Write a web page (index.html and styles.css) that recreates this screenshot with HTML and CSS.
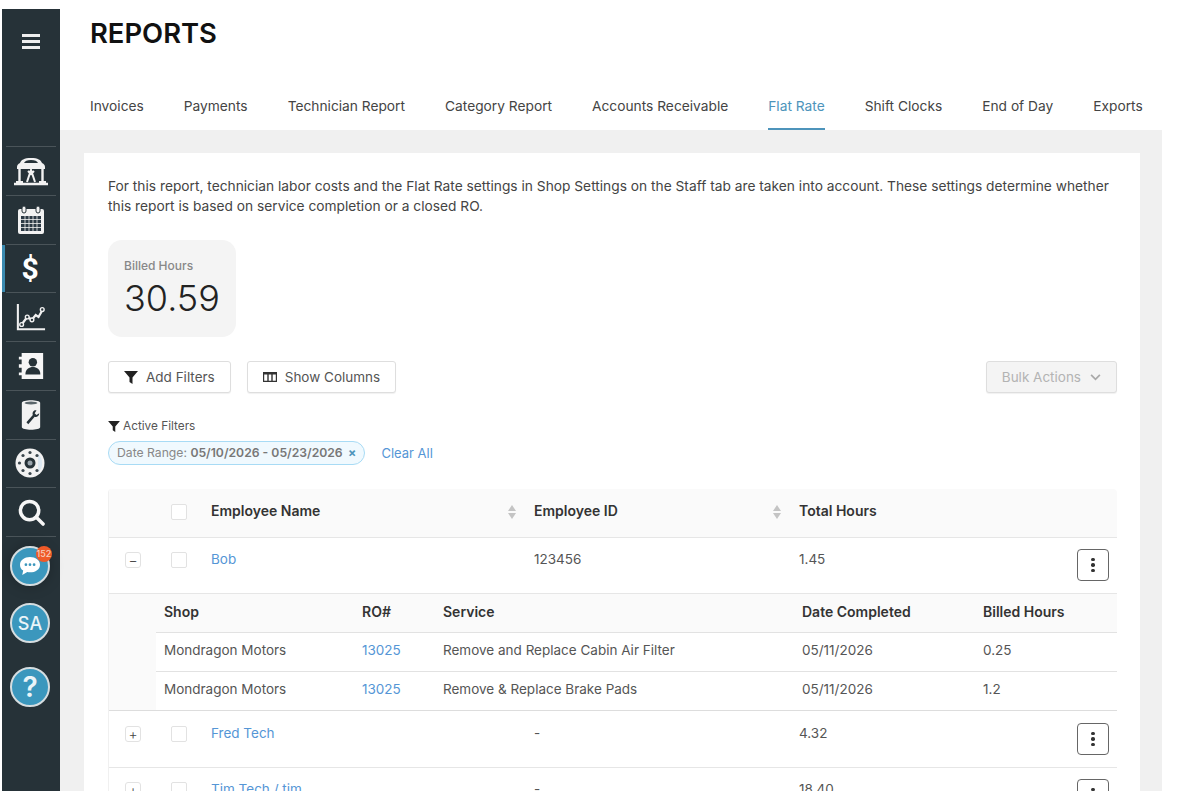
FILE: index.html
```html
<!DOCTYPE html>
<html lang="en">
  <head>
    <meta charset="UTF-8" />
    <meta name="viewport" content="width=device-width, initial-scale=1.0" />
    <title>Reports</title>
    <link rel="stylesheet" href="styles.css">
  </head>
  <body>
    <div class="frame">
      <nav class="sidebar">
        <div class="burger"><span></span><span></span><span></span></div>

        <a class="nav-item">
          <svg viewBox="0 0 36 30" width="36" height="30" fill="none" stroke="#f2f2f2" stroke-width="2">
            <path d="M1 28h34" stroke-width="2.500"/>
            <path d="M3 26h7M26 26h7" stroke-width="2"/>
            <path d="M6.500 11v15M29.500 11v15" stroke-width="2.400"/>
            <path d="M4 11c0-2 1-3 3-4 1-3 4-5 11-5s10 2 11 5c2 1 3 2 3 4v2H4z" fill="#f2f2f2" stroke="none"/>
            <path d="M11 7c1-2 3-3 7-3s6 1 7 3z" fill="#263238" stroke="none"/>
            <path d="M14 26l4-12 4 12M15 15l3 3 3-3" stroke-width="2"/>
          </svg>
        </a>
        <a class="nav-item">
          <svg viewBox="0 0 28 30" width="28" height="30" fill="none">
            <rect x="1" y="4" width="26" height="25" rx="2" fill="#f2f2f2"/>
            <rect x="5" y="1" width="4" height="7" rx="2" fill="#f2f2f2" stroke="#263238"/>
            <rect x="19" y="1" width="4" height="7" rx="2" fill="#f2f2f2" stroke="#263238"/>
            <path d="M4 11h20v15H4z" fill="#2c3a45"/>
            <path d="M4 14.500h20M4 18.500h20M4 22.500h20M8 11v15M12 11v15M16 11v15M20 11v15" stroke="#f2f2f2" stroke-width=".8"/>
          </svg>
        </a>
        <a class="nav-item active"><span class="dollar">$</span></a>
        <a class="nav-item">
          <svg viewBox="0 0 32 30" width="30" height="30" fill="none" stroke="#f0f0f0">
            <path d="M2 1v27h29" stroke-width="2.200"/>
            <path d="M6 23l6-8 5 3 4-5 3 2 4-7" stroke-width="2.400"/>
            <circle cx="6" cy="23" r="2" fill="#263238" stroke-width="1.500"/>
            <circle cx="12" cy="15" r="2" fill="#263238" stroke-width="1.500"/>
            <circle cx="17" cy="18" r="2" fill="#263238" stroke-width="1.500"/>
            <circle cx="28" cy="7" r="2" fill="#263238" stroke-width="1.500"/>
          </svg>
        </a>
        <a class="nav-item">
          <svg viewBox="0 0 28 30" width="28" height="28">
            <path d="M4 1h23v28H4v-4H1v-3h3v-5H1v-4h3V8H1V5h3z" fill="#f6f6f6"/>
            <circle cx="16" cy="11" r="4.500" fill="#263238"/>
            <path d="M8 24c0-6 4-8 8-8s8 2 8 8z" fill="#263238"/>
          </svg>
        </a>
        <a class="nav-item">
          <svg viewBox="0 0 24 34" width="22" height="32">
            <path d="M2 4c0-4 20-4 20 0v26c0 4-20 4-20 0z" fill="#f2f2f2"/>
            <ellipse cx="12" cy="4" rx="7" ry="1.600" fill="#5b666b"/>
            <path d="M7 25l7-8c-1-3 1-6 4-5l-2 3 2 2 3-2c0 3-3 5-5 4l-7 8z" fill="#263238"/>
          </svg>
        </a>
        <a class="nav-item">
          <svg viewBox="0 0 32 30" width="32" height="30">
            <circle cx="15" cy="15" r="14.500" fill="#f2f2f2"/>
            <path d="M23 6c5 3 6 15 0 18z" fill="#dce8f2"/>
            <circle cx="15" cy="15" r="5.500" fill="#263238"/>
            <circle cx="15" cy="15" r="2.500" fill="#9aa5ad"/>
            <g fill="#3a464d">
              <circle cx="15" cy="4.500" r="1.600"/><circle cx="15" cy="25.500" r="1.600"/>
              <circle cx="4.500" cy="15" r="1.600"/><circle cx="8" cy="7.500" r="1.600"/>
              <circle cx="22" cy="7.500" r="1.600"/><circle cx="8" cy="22.500" r="1.600"/>
              <circle cx="22" cy="22.500" r="1.600"/>
            </g>
          </svg>
        </a>
        <a class="nav-item">
          <svg viewBox="0 0 28 28" width="27" height="27" fill="none" stroke="#f6f6f6">
            <circle cx="12" cy="12" r="9.500" stroke-width="3.600"/>
            <path d="M19 19l7 7" stroke-width="3.600" stroke-linecap="round"/>
          </svg>
        </a>

        <div class="round-btn first">
          <svg viewBox="0 0 24 22" width="22" height="20">
            <path d="M12 1c6 0 11 3.500 11 8.500S18 18 12 18c-1 0-2 0-3-.3L3.500 21l1-5C2 14.500 1 12 1 9.500 1 4.500 6 1 12 1z" fill="#fff"/>
            <circle cx="7.500" cy="9.500" r="1.500" fill="#3b97bd"/>
            <circle cx="12" cy="9.500" r="1.500" fill="#3b97bd"/>
            <circle cx="16.500" cy="9.500" r="1.500" fill="#3b97bd"/>
          </svg>
          <span class="badge">152</span>
        </div>
        <div class="round-btn">SA</div>
        <div class="round-btn help">?</div>
      </nav>

      <main class="main">
        <header class="top">
          <h1>REPORTS</h1>
          <div class="tabs">
            <a>Invoices</a>
            <a>Payments</a>
            <a>Technician Report</a>
            <a>Category Report</a>
            <a>Accounts Receivable</a>
            <a class="current">Flat Rate</a>
            <a>Shift Clocks</a>
            <a>End of Day</a>
            <a>Exports</a>
          </div>
        </header>

        <div class="content">
          <section class="card">
            <p class="intro">For this report, technician labor costs and the Flat Rate settings in Shop Settings on the Staff tab are taken into account. These settings determine whether this report is based on service completion or a closed RO.</p>

            <div class="stat">
              <div class="stat-label">Billed Hours</div>
              <div class="stat-value">30.59</div>
            </div>

            <div class="toolbar">
              <button class="btn">
                <svg class="funnel" viewBox="0 0 14 13" width="14" height="13"><path d="M0 0h14L8.500 6.500V13l-3-2V6.500z"/></svg>
                Add Filters
              </button>
              <button class="btn">
                <svg viewBox="0 0 14 10" width="14" height="10" fill="none" stroke="#333"><path d="M.5.500h13v9H.5zM5 .500v9M9 .500v9" stroke-width="1.400"/><path d="M.5 1.500h13" stroke-width="2"/></svg>
                Show Columns
              </button>
              <button class="btn bulk">
                Bulk Actions
                <svg viewBox="0 0 12 8" width="11" height="7" fill="none" stroke="#a9a9a9" stroke-width="2"><path d="M1 1l5 5 5-5"/></svg>
              </button>
            </div>

            <div class="filters-title">
              <svg class="funnel" viewBox="0 0 14 13" width="12" height="11"><path d="M0 0h14L8.500 6.500V13l-3-2V6.500z"/></svg>
              Active Filters
            </div>
            <div class="filters">
              <span class="chip">Date Range: <b>05/10/2026 - 05/23/2026</b> <i>×</i></span>
              <a class="clear">Clear All</a>
            </div>

            <div class="table">
              <div class="row head">
                <span></span>
                <span class="check"></span>
                <span class="sortable">Employee Name
                  <svg class="sort" viewBox="0 0 10 16" width="10" height="16"><path d="M5 1l4 6H1zM5 15l4-6H1z"/></svg>
                </span>
                <span class="sortable">Employee ID
                  <svg class="sort" viewBox="0 0 10 16" width="10" height="16"><path d="M5 1l4 6H1zM5 15l4-6H1z"/></svg>
                </span>
                <span>Total Hours</span>
                <span></span>
              </div>

              <div class="row open">
                <span class="toggle">−</span>
                <span class="check"></span>
                <a>Bob</a>
                <span>123456</span>
                <span>1.45</span>
                <span class="more"><i></i><i></i><i></i></span>
              </div>

              <div class="sub">
                <div class="sub-row sub-head">
                  <span>Shop</span><span>RO#</span><span>Service</span><span>Date Completed</span><span>Billed Hours</span>
                </div>
                <div class="sub-row">
                  <span>Mondragon Motors</span><a>13025</a><span>Remove and Replace Cabin Air Filter</span><span>05/11/2026</span><span>0.25</span>
                </div>
                <div class="sub-row">
                  <span>Mondragon Motors</span><a>13025</a><span>Remove &amp; Replace Brake Pads</span><span>05/11/2026</span><span>1.2</span>
                </div>
              </div>

              <div class="row after-sub">
                <span class="toggle">+</span>
                <span class="check"></span>
                <a>Fred Tech</a>
                <span>-</span>
                <span>4.32</span>
                <span class="more"><i></i><i></i><i></i></span>
              </div>

              <div class="row">
                <span class="toggle">+</span>
                <span class="check"></span>
                <a>Tim Tech / tim</a>
                <span>-</span>
                <span>18.40</span>
                <span class="more"><i></i><i></i><i></i></span>
              </div>
            </div>
          </section>
        </div>
      </main>
    </div>
  </body>
</html>
```

FILE: styles.css
```css
html,
body {
  margin: 0;
  padding: 0;
  height: 800px;
  overflow: hidden;
  background: #fff;
}
body {
  font-family: Inter, "Noto Sans", sans-serif;
  font-size: 13.5px;
  color: #555;
}
.frame {
  display: flex;
  height: 782px;
  margin: 9px 20px 0 2px;
  overflow: hidden;
}

/* sidebar */
.sidebar {
  width: 58px;
  flex: none;
  background: #263238;
  display: flex;
  flex-direction: column;
  align-items: center;
}
.burger {
  height: 64px;
  padding-top: 25px;
  box-sizing: border-box;
  display: flex;
  flex-direction: column;
  gap: 3px;
  margin-bottom: 73px;
}
.burger span {
  width: 18px;
  height: 3px;
  background: #eee;
  display: block;
}
.nav-item {
  width: 50px;
  height: 47.75px;
  border-top: 1px solid #4a5459;
  display: flex;
  align-items: center;
  justify-content: center;
  position: relative;
}
.nav-item:nth-last-of-type(1) {
  border-bottom: 1px solid #4a5459;
}
.nav-item.active::before {
  content: "";
  position: absolute;
  left: -4px;
  top: 0;
  bottom: 0;
  width: 3px;
  background: #3b8bb0;
}
.dollar {
  color: #fff;
  font-family: Roboto, sans-serif;
  font-weight: 700;
  font-size: 30px;
  margin-right: 2px;
}
.round-btn {
  width: 36px;
  height: 36px;
  border-radius: 50%;
  background: #3b97bd;
  border: 2px solid #d5dde0;
  color: #eaf4f8;
  font-size: 18px;
  font-weight: 500;
  display: flex;
  align-items: center;
  justify-content: center;
  margin-top: 17px;
  position: relative;
  right: 1px;
}
.round-btn.first {
  margin-top: 9px;
  box-shadow: 0 0 14px rgba(0, 0, 0, 0.25);
}
.round-btn.help {
  margin-top: 24px;
  font-size: 28px;
  font-weight: 600;
}
.badge {
  position: absolute;
  top: -2px;
  right: -4px;
  width: 16px;
  height: 16px;
  border-radius: 50%;
  background: #ef5a28;
  color: #f6cdbd;
  font-size: 9px;
  line-height: 16px;
  text-align: center;
}

/* header + tabs */
.main {
  flex: 1;
  display: flex;
  flex-direction: column;
  min-width: 0;
}
.top {
  height: 121px;
  flex: none;
  padding-left: 30px;
  box-sizing: border-box;
  background: #fff;
}
h1 {
  margin: 0;
  padding-top: 7px;
  font-size: 27.4px;
  line-height: 34px;
  font-weight: 600;
  color: #111;
}
.tabs {
  display: flex;
  gap: 40px;
  margin-top: 39px;
  font-size: 13.75px;
}
.tabs a {
  height: 41px;
  padding-top: 9px;
  box-sizing: border-box;
  line-height: 17px;
  color: #444;
  white-space: nowrap;
}
.tabs a.current {
  color: #4d94bb;
  border-bottom: 2px solid #4d94bb;
}
.content {
  flex: 1;
  background: #f0f0f0;
  padding: 23px 22px 0 24px;
  min-height: 0;
}
.card {
  background: #fff;
  height: 100%;
  padding: 23px 23px 0 24px;
  box-sizing: border-box;
  overflow: hidden;
}
.intro {
  margin: 0;
  line-height: 20px;
  color: #444;
  font-size: 13.75px;
}

/* billed hours tile */
.stat {
  width: 128px;
  height: 97px;
  margin-top: 24px;
  box-sizing: border-box;
  padding: 19px 16px 0;
  background: #f4f4f4;
  border-radius: 14px;
}
.stat-label {
  font-size: 12px;
  font-weight: 500;
  color: #888;
  line-height: 14px;
}
.stat-value {
  font-size: 36px;
  font-weight: 300;
  line-height: 42px;
  margin-top: 4px;
  color: #222;
}

/* toolbar */
.toolbar {
  display: flex;
  gap: 16px;
  margin-top: 24px;
}
.btn {
  height: 32px;
  padding: 0 15px;
  display: flex;
  align-items: center;
  gap: 8px;
  font-family: inherit;
  font-size: 13.5px;
  color: #555;
  background: #fff;
  border: 1px solid #dedede;
  border-radius: 3px;
  box-shadow: 0 1px 1px rgba(0, 0, 0, 0.06);
}
.btn.bulk {
  margin-left: auto;
  color: #b3b3b3;
  background: #f4f4f4;
  gap: 9px;
}
.funnel {
  fill: #222;
}
.filters-title {
  display: flex;
  align-items: center;
  gap: 3px;
  margin-top: 26px;
  font-size: 11.8px;
  line-height: 15px;
  color: #555;
}
.filters {
  display: flex;
  align-items: center;
  gap: 16px;
  margin-top: 7px;
}
.chip {
  height: 24px;
  padding: 0 8px;
  box-sizing: border-box;
  line-height: 22px;
  font-size: 12.2px;
  color: #888;
  background: #f0f9fe;
  border: 1px solid #a8dbf5;
  border-radius: 12px;
}
.chip b {
  color: #777;
  font-weight: 600;
}
.chip i {
  font-style: normal;
  font-weight: 700;
  color: #4d94bb;
  margin-left: 2px;
}
.clear,
.table a {
  color: #5596d6;
}
.clear {
  font-size: 13px;
}

/* table */
.table {
  margin-top: 24px;
  border-left: 1px solid #f0f0f0;
  border-radius: 4px 4px 0 0;
}
.row {
  display: grid;
  grid-template-columns: 62px 40px 323px 265px 1fr 40px;
  height: 57px;
  padding-top: 12px;
  box-sizing: border-box;
  border-bottom: 1px solid #e6e6e6;
  line-height: 18px;
  position: relative;
}
.row.open {
  height: 56px;
}
.row.after-sub {
  padding-top: 13px;
}
.row.head {
  height: 49px;
  padding-top: 13px;
  background: #fafafa;
  font-size: 14px;
  font-weight: 600;
  color: #333;
  border-radius: 4px 4px 0 0;
}
.row > span,
.row > a {
  display: block;
}
.sortable {
  position: relative;
}
.sort {
  position: absolute;
  right: 17px;
  top: 2px;
  fill: #c4c4c4;
}
.check {
  width: 16px;
  height: 16px;
  border: 1px solid #e2e2e2;
  border-radius: 2px;
  box-sizing: border-box;
  background: #fff;
  margin-top: 2px;
}
.toggle {
  width: 16px;
  height: 16px;
  margin: 2px 0 0 16px;
  box-sizing: border-box;
  border: 1px solid #e2e2e2;
  border-radius: 3px;
  line-height: 13px;
  text-align: center;
  color: #444;
  font-size: 14px;
  font-weight: 300;
  background: #fff;
}
.more {
  width: 32px;
  height: 32px;
  box-sizing: border-box;
  margin-top: -1px;
  border: 1px solid #666;
  border-radius: 4px;
  display: flex !important;
  flex-direction: column;
  align-items: center;
  justify-content: center;
  gap: 2px;
  background: #fff;
}
.more i {
  width: 3.5px;
  height: 3.5px;
  border-radius: 50%;
  background: #333;
  display: block;
}

/* expanded rows */
.sub {
  padding-left: 47px;
  background: #fafafa;
  border-bottom: 1px solid #ddd;
}
.sub-row {
  display: grid;
  grid-template-columns: 198px 81px 359px 181px 1fr;
  height: 39px;
  padding-left: 8px;
  line-height: 35px;
  box-sizing: border-box;
  background: #fff;
  border-bottom: 1px solid #e2e2e2;
}
.sub-row:last-child {
  height: 38px;
  border-bottom: none;
}
.sub-head {
  background: #fafafa;
  font-size: 14px;
  font-weight: 600;
  color: #333;
  line-height: 36px;
}
```
